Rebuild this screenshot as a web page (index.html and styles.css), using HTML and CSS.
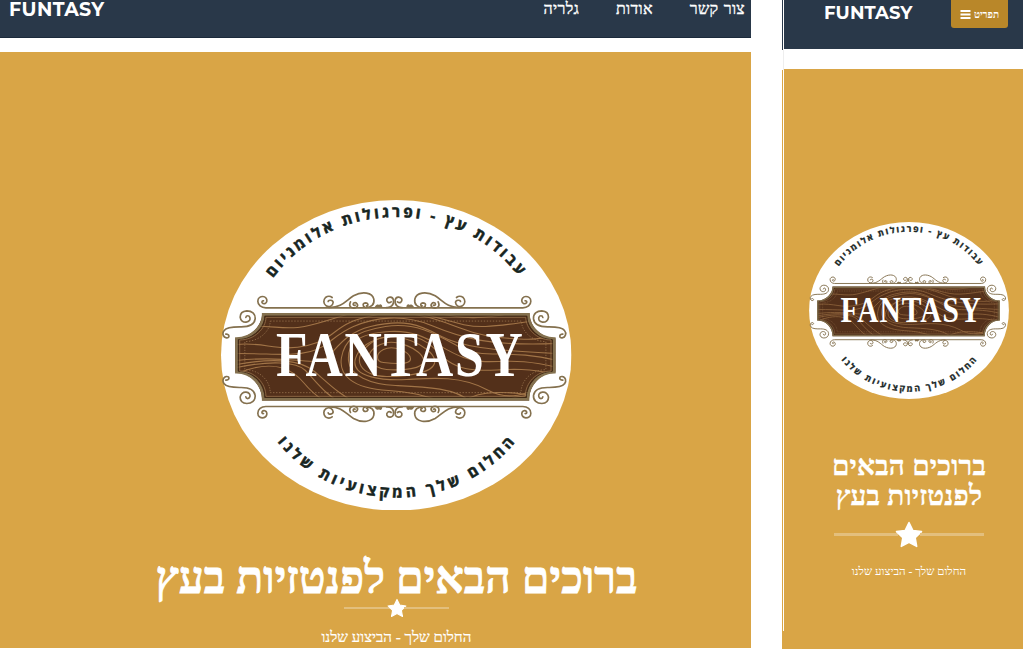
FILE: index.html
```html
<!DOCTYPE html>
<html lang="he">
<head>
<meta charset="utf-8">
<title>FUNTASY</title>
<link rel="stylesheet" href="styles.css">
</head>
<body>
<svg class="defs" width="0" height="0" aria-hidden="true">
  <defs>
    <path id="arc-top" d="M248 355A149 138.500 0 0 1 546 355"/>
    <path id="arc-bottom" d="M247 355A150 142 0 0 0 547 355"/>
    <path id="plate" d="M262.7 312.7H530C530 325 541 337.7 556 337.7V372C541 372 529.5 385 529.5 400H262.7C262.7 385 251 372 235.7 372V337.7C251 337.7 262.7 325 262.7 312.7Z"/>
    <clipPath id="wood"><use href="#plate"/></clipPath>
    <g id="flourish" fill="none" stroke="#84714f" stroke-width="5" stroke-linecap="round">
      <path d="M557 352H172C158 352 148 343 148 332C148 322 156 318 163 318C171 318 176 325 175 332C174 340 165 342 161 337C159 333 162 330 165 331"/>
      <path d="M52 431C64 430 64 443 54 442C44 441 40 428 47 420C55 408 80 409 98 409C122 409 138 402 140 385C141 370 130 361 115 361C102 362 95 370 95 380C96 390 104 396 113 395C122 394 126 388 124 381C122 374 113 374 112 381"/>
      <path d="M359 333C359 327 374 328 374 336C373 347 362 351 353 346C344 340 344 328 351 321C358 316 366 317 371 321"/>
      <path d="M362 351C400 352 412 330 435 316C462 301 492 306 496 326C499 342 488 352 470 351C461 347 462 337 472 337C480 338 480 346 474 346"/>
      <path d="M426 334C418 351 434 356 444 350C452 343 443 333 435 338C432 342 436 346 440 344"/>
      <path d="M548 334C541 340 533 334 535 326C539 317 553 318 555 329C557 345 546 352 534 351"/>
      <path d="M501 350Q507 341 512 347Q518 340 519 350Z" fill="#84714f"/>
    </g>
    <symbol id="logo" viewBox="221.5 199.5 350.5 310.5">
      <ellipse cx="396.75" cy="354.75" rx="175.25" ry="155.25" fill="#fff"/>
      <g transform="translate(209 190) scale(.33333)">
        <use href="#flourish"/>
        <use href="#flourish" transform="translate(1115 0) scale(-1 1)"/>
        <use href="#flourish" transform="translate(0 1000) scale(1 -1)"/>
        <use href="#flourish" transform="translate(1115 1000) scale(-1 -1)"/>
      </g>
      <use href="#plate" fill="#53301a"/>
      <g clip-path="url(#wood)" fill="none" stroke="#a17447" stroke-width="1.1">
        <path d="M237 344C265 341 279 352 308 345S333 325 365 317S400 311 425 316S468 334 500 337S536 339 558 335"/>
        <path d="M237 326C272 324 286 330 305 326S338 316 359 311M237 353C275 353 292 356 311 351S333 335 354 326S403 313 432 325S488 346 558 343"/>
        <path d="M237 360C280 355 305 362 319 361S338 334 371 326S420 324 440 335S490 350 558 353"/>
        <path d="M237 367C270 360 297 361 306 370S329 399 347 404M237 373C276 357 294 370 304 382S324 401 334 405M237 364C275 357 302 360 315 371S340 395 362 405"/>
        <path d="M558 360C510 348 483 359 461 347S417 321 386 326S345 340 342 357S352 388 389 390S434 401 464 405"/>
        <path d="M558 367C509 354 491 367 464 357S425 329 390 331S348 345 349 360S371 384 396 385S460 387 472 403"/>
        <path d="M558 374C507 363 493 374 466 368S438 343 417 337S362 338 356 358S387 380 407 379S459 374 487 389S530 389 558 382"/>
        <path d="M375 340C397 329 432 346 435 359S410 376 387 376S346 360 375 340ZM381 344C396 337 422 349 424 359S401 370 387 369S359 354 381 344ZM384 349C394 344 410 351 411 358S392 363 384 362S376 353 384 349Z"/>
        <path d="M411 311C442 316 460 327 486 326S538 318 558 319M432 311C461 319 485 319 515 312M460 405C475 387 516 391 540 397M498 405C514 393 532 397 544 391"/>
      </g>
      <use href="#plate" fill="none" stroke="#84714f" stroke-width="2.8" transform="translate(396 356.4) scale(.992 .972) translate(-396 -356.4)"/>
      <use href="#plate" fill="none" stroke="#3d2815" stroke-width=".9" transform="translate(396 356.4) scale(.98 .93) translate(-396 -356.4)"/>
      <use href="#plate" fill="none" stroke="#9a744d" stroke-width=".8" transform="translate(396 356.4) scale(.972 .905) translate(-396 -356.4)"/>
      <use href="#plate" fill="none" stroke="#a17c55" stroke-width=".8" stroke-dasharray="1.5 1.7" transform="translate(396 356.4) scale(.94 .82) translate(-396 -356.4)"/>
      <text class="logo-name" transform="translate(276.500 375.700) scale(.82 1)" textLength="301" lengthAdjust="spacing">FANTASY</text>
      <text class="logo-arc logo-arc-top"><textPath href="#arc-top" startOffset="50%">עבודות עץ - ופרגולות אלומניום</textPath></text>
      <text class="logo-arc logo-arc-bottom"><textPath href="#arc-bottom" startOffset="50.300%">החלום שלך המקצועיות שלנו</textPath></text>
    </symbol>
    <symbol id="star" viewBox="0 0 28 27">
      <path d="M14 1.500L17.800 9.400L26.500 10.600L20.200 16.700L21.700 25.400L14 21.300L6.300 25.400L7.800 16.700L1.500 10.600L10.200 9.400Z" fill="#fff" stroke="#fff" stroke-width="1.500" stroke-linejoin="round"/>
    </symbol>
  </defs>
</svg>
<main class="showcase">
  <section class="screen desktop">
    <header class="bar">
      <span class="brand">FUNTASY</span>
      <nav class="menu" dir="rtl"><a>צור קשר</a><a>אודות</a><a>גלריה</a></nav>
    </header>
    <div class="hero">
      <svg class="logo"><use href="#logo"/></svg>
      <h1 class="title" dir="rtl">ברוכים הבאים לפנטזיות בעץ</h1>
      <div class="divider"><span></span><svg><use href="#star"/></svg><span></span></div>
      <p class="tagline" dir="rtl">החלום שלך - הביצוע שלנו</p>
    </div>
  </section>
  <div class="edge"><i class="edge-navy"></i><i class="edge-gap"></i><i class="edge-gold"></i><i class="edge-end"></i></div>
  <section class="screen mobile">
    <header class="bar">
      <span class="brand">FUNTASY</span>
      <button class="toggle"><svg width="11" height="9" viewBox="0 0 11 9"><path d="M.5 1h10M.5 4.500h10M.5 8h10" stroke="#fff" stroke-width="1.900"/></svg><span>תפריט</span></button>
    </header>
    <div class="hero">
      <svg class="logo"><use href="#logo"/></svg>
      <h1 class="title" dir="rtl">ברוכים הבאים<br>לפנטזיות בעץ</h1>
      <div class="divider"><span></span><svg><use href="#star"/></svg><span></span></div>
      <p class="tagline" dir="rtl">החלום שלך - הביצוע שלנו</p>
    </div>
  </section>
</main>
</body>
</html>
```
FILE: styles.css
```css
* { box-sizing: border-box; }
body { margin: 0; background: #fff; font-family: "Liberation Serif", serif; color: #fff; overflow: hidden; }
.defs { display: block; height: 0; }
.showcase { display: flex; width: 1023px; height: 649px; }
.screen { display: flex; flex-direction: column; height: 649px; }
.bar { display: flex; justify-content: space-between; align-items: flex-start; background: #293849; flex: none; }
.brand { font-family: Montserrat, Inter, sans-serif; font-weight: 700; }
.hero { display: flex; flex-direction: column; align-items: center; flex: 1; background: #d9a546; }
.title, .tagline { margin: 0; white-space: nowrap; flex: none; }
.logo, .divider { flex: none; }
.divider { display: flex; align-items: center; }
.divider span { flex: 1; background: #e3bf7d; }
.divider svg { margin: 0 -3px; }

.desktop { width: 751px; height: 648px; margin-right: 31px; }
.desktop .bar { height: 38px; margin-bottom: 14px; padding: 0 6px 0 9px; border-bottom: 1px solid #1b2a3b; }
.desktop .brand { font-size: 19px; line-height: 20px; letter-spacing: .4px; }
.menu { display: flex; gap: 37px; font-size: 16px; line-height: 18px; letter-spacing: .3px; word-spacing: 1px; -webkit-text-stroke: .35px #fff; }
.desktop .hero { padding: 147.500px 0 0 42px; }
.desktop .logo { width: 350.500px; height: 310.500px; }
.desktop .title { font-size: 44.400px; line-height: 50px; margin-top: 43px; -webkit-text-stroke: .8px #fff; }
.desktop .divider { width: 105px; height: 20px; margin-top: -5px; }
.desktop .divider span { height: 2px; }
.desktop .divider svg { width: 20px; height: 20px; }
.desktop .tagline { font-size: 15.100px; line-height: 20px; margin-top: 9px; -webkit-text-stroke: .2px #fff; }

.edge { display: flex; flex-direction: column; width: 2px; }
.edge-navy { height: 50px; border-left: 1px solid #293849; }
.edge-gap { height: 20px; border-right: 1px solid #eee; }
.edge-gold { height: 561px; border-left: 1px solid #d9a546; }
.edge-end { flex: 1; background: #d9a546; }

.mobile { width: 239px; }
.mobile .bar { height: 49px; margin-bottom: 20px; padding: 0 15px 0 40px; }
.mobile .brand { font-size: 18px; line-height: 26px; letter-spacing: .1px; }
.toggle { display: flex; align-items: center; justify-content: center; gap: 3px; width: 57px; height: 28px; padding: 0; border: 0; border-radius: 0 0 3px 3px; background: #b98729; color: #fff; font: 700 10px "Liberation Serif", serif; }
.mobile .hero { padding: 153px 0 0 11px; }
.mobile .logo { width: 200px; height: 177px; }
.mobile .title { font-size: 28px; line-height: 30px; margin-top: 52px; text-align: center; letter-spacing: .15px; -webkit-text-stroke: .3px #fff; }
.mobile .divider { width: 150px; height: 28px; margin-top: 9px; }
.mobile .divider span { height: 3px; }
.mobile .divider svg { width: 28px; height: 27px; }
.mobile .tagline { font-size: 11.500px; line-height: 16px; margin-top: 15px; }

.logo-name { font: 700 63px "Liberation Serif", serif; fill: #fff; }
.logo-arc { font: 700 15px "Open Sans", "Noto Sans", sans-serif; fill: #17251f; stroke: #17251f; stroke-width: .6px; text-anchor: middle; }
.logo-arc-top { letter-spacing: 3px; }
.logo-arc-bottom { letter-spacing: 3.700px; }
```
